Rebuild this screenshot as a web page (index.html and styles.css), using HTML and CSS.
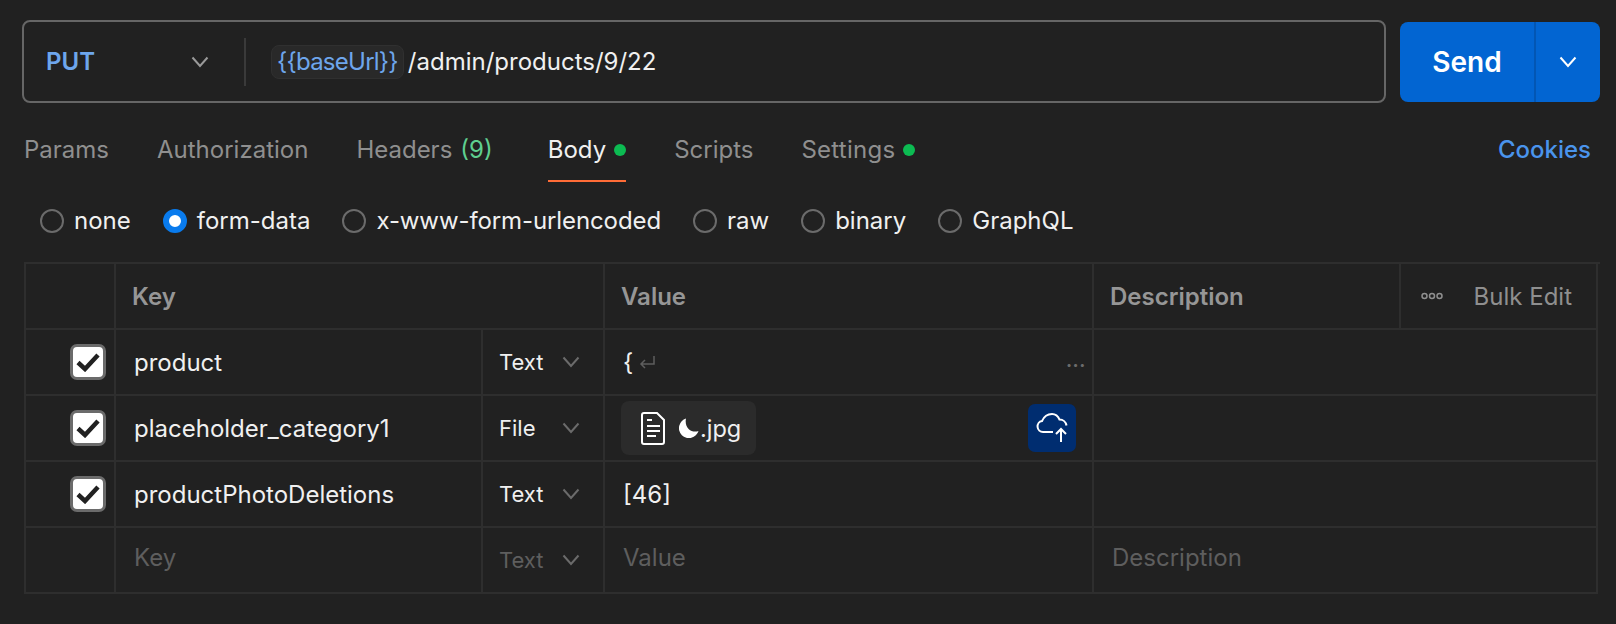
FILE: index.html
```html
<!DOCTYPE html>
<html lang="en">
<head>
    <meta charset="UTF-8">
    <title>PUT /admin/products/9/22</title>
    <link rel="stylesheet" href="styles.css">
</head>
<body>
    <div class="request-bar">
        <div class="url-bar">
            <div class="method">
                <span>PUT</span>
                <svg class="chevron" width="18" height="12" viewBox="0 0 18 12"><path d="M1.5 1.5 9 10l7.5-8.5"/></svg>
            </div>
            <div class="url">
                <span class="variable">{{baseUrl}}</span>
                <span>/admin/products/9/22</span>
            </div>
        </div>
        <div class="send">
            <span class="send-label">Send</span>
            <span class="send-menu">
                <svg class="chevron" width="18" height="12" viewBox="0 0 18 12"><path d="M1.5 1.5 9 10l7.5-8.5"/></svg>
            </span>
        </div>
    </div>

    <div class="tabs">
        <span class="tab">Params</span>
        <span class="tab">Authorization</span>
        <span class="tab headers">Headers <span class="count">(9)</span></span>
        <span class="tab active">Body <i class="dot"></i></span>
        <span class="tab">Scripts</span>
        <span class="tab settings">Settings <i class="dot"></i></span>
        <span class="cookies">Cookies</span>
    </div>

    <div class="body-types">
        <label class="radio"><i></i>none</label>
        <label class="radio checked"><i></i>form-data</label>
        <label class="radio long"><i></i>x-www-form-urlencoded</label>
        <label class="radio"><i></i>raw</label>
        <label class="radio"><i></i>binary</label>
        <label class="radio"><i></i>GraphQL</label>
    </div>

    <div class="params">
        <div class="cell"></div>
        <div class="cell head span-2">Key</div>
        <div class="cell head">Value</div>
        <div class="cell head">Description</div>
        <div class="cell bulk">
            <svg width="22" height="8" viewBox="0 0 22 8"><circle cx="3.5" cy="4" r="2.5"/><circle cx="11" cy="4" r="2.5"/><circle cx="18.5" cy="4" r="2.5"/></svg>
            <span>Bulk Edit</span>
        </div>

        <div class="cell check"><span class="checkbox"><svg width="26" height="20" viewBox="0 0 26 20"><path d="M3 10.500 10 17 23 3"/></svg></span></div>
        <div class="cell key">product</div>
        <div class="cell type">Text <svg class="chevron" width="18" height="12" viewBox="0 0 18 12"><path d="M1.5 1.5 9 10l7.5-8.5"/></svg></div>
        <div class="cell value multiline">
            <span>{</span>
            <svg class="return" width="16" height="14" viewBox="0 0 16 14"><path d="M15 1v8H2M6 5 2 9l4 4"/></svg>
            <span class="more">&bull;&bull;&bull;</span>
        </div>
        <div class="cell span-2"></div>

        <div class="cell check"><span class="checkbox"><svg width="26" height="20" viewBox="0 0 26 20"><path d="M3 10.500 10 17 23 3"/></svg></span></div>
        <div class="cell key">placeholder_category1</div>
        <div class="cell type">File <svg class="chevron" width="18" height="12" viewBox="0 0 18 12"><path d="M1.5 1.5 9 10l7.5-8.5"/></svg></div>
        <div class="cell value file">
            <span class="file-chip">
                <svg width="24" height="33" viewBox="0 0 24 33" class="doc"><path d="M3 1h13l7 7v22a2 2 0 0 1-2 2H3a2 2 0 0 1-2-2V3a2 2 0 0 1 2-2z"/><path d="M6 8h5M6 14h13M6 19h13M6 24h9"/></svg>
                <span class="file-name">
                    <svg width="20" height="20" viewBox="0 0 20 20"><path d="M7 .5A10 10 0 1 0 19.500 13C13 15.500 5 10 7 .5z"/></svg>.jpg
                </span>
            </span>
            <span class="upload">
                <svg width="32" height="30" viewBox="0 0 32 30"><path d="M17 19H7a5.500 5.500 0 0 1-1-10.900C8 3.500 12 1 16 1c3.500 0 6 2 7.500 5.500 3.500 0 6.500 2.500 7 6"/><path d="M25 29V16M20 21l5-5 5 5"/></svg>
            </span>
        </div>
        <div class="cell span-2"></div>

        <div class="cell check"><span class="checkbox"><svg width="26" height="20" viewBox="0 0 26 20"><path d="M3 10.500 10 17 23 3"/></svg></span></div>
        <div class="cell key">productPhotoDeletions</div>
        <div class="cell type">Text <svg class="chevron" width="18" height="12" viewBox="0 0 18 12"><path d="M1.5 1.5 9 10l7.5-8.5"/></svg></div>
        <div class="cell value">[46]</div>
        <div class="cell span-2"></div>

        <div class="cell"></div>
        <div class="cell key placeholder">Key</div>
        <div class="cell type muted">Text <svg class="chevron" width="18" height="12" viewBox="0 0 18 12"><path d="M1.5 1.5 9 10l7.5-8.5"/></svg></div>
        <div class="cell value placeholder">Value</div>
        <div class="cell value placeholder span-2">Description</div>
    </div>
</body>
</html>
```

FILE: styles.css
```css
body {
    font-family: Inter, "Liberation Sans", sans-serif;
    font-size: 24px;
    background-color: #212121;
    color: #f0f0f0;
    margin: 0;
    padding: 20px 16px 0 22px;
}

svg {
    display: block;
    flex: none;
}

.chevron path {
    fill: none;
    stroke: #9a9a9a;
    stroke-width: 2;
}

/* request bar */
.request-bar {
    display: flex;
    align-items: flex-start;
    gap: 14px;
}

.url-bar {
    flex: 1;
    height: 83px;
    box-sizing: border-box;
    display: flex;
    align-items: center;
    border: 2px solid #666;
    border-radius: 8px;
}

.method {
    width: 222px;
    height: 48px;
    box-sizing: border-box;
    display: flex;
    align-items: center;
    justify-content: space-between;
    padding: 0 35px 0 22px;
    border-right: 2px solid #3a3a3a;
    color: #6ea6ec;
    font-weight: 600;
}

.url {
    display: flex;
    align-items: center;
    gap: 4px;
    margin-left: 25px;
}

.variable {
    padding: 0 5px;
    height: 34px;
    line-height: 32px;
    box-sizing: border-box;
    border: 1px solid #303030;
    border-radius: 8px;
    background: #292929;
    color: #6ea6ec;
    letter-spacing: -0.75px;
}

.send {
    width: 200px;
    height: 80px;
    margin-top: 2px;
    display: flex;
    background: #0265d2;
    border-radius: 8px;
    color: #fff;
    font-size: 28px;
    font-weight: 600;
}

.send-label {
    width: 134px;
    display: flex;
    align-items: center;
    justify-content: center;
    border-right: 2px solid #0256b4;
}

.send-menu {
    flex: 1;
    display: flex;
    align-items: center;
    justify-content: center;
}

.send-menu .chevron path {
    stroke: #fff;
}

/* tabs */
.tabs {
    display: flex;
    align-items: flex-start;
    gap: 48px;
    margin-top: 16px;
    padding: 0 9px 0 2px;
}

.tab {
    display: flex;
    align-items: center;
    gap: 8px;
    padding: 16px 0 15px;
    line-height: 30px;
    color: #8f8f8f;
    border-bottom: 2px solid transparent;
}

.tab.headers {
    margin-right: 7px;
}

.tab.settings {
    letter-spacing: 0.25px;
}

.tab.active {
    color: #f0f0f0;
    border-bottom-color: #ff6c37;
}

.count {
    color: #5fcf90;
}

.dot {
    width: 12px;
    height: 12px;
    border-radius: 50%;
    background: #0cbb52;
}

.cookies {
    margin-left: auto;
    padding-top: 16px;
    line-height: 30px;
    color: #4a94ec;
    font-weight: 500;
}

/* body type radios */
.body-types {
    display: flex;
    gap: 32px;
    padding: 24px 0 26px 18px;
    line-height: 30px;
}

.radio {
    display: flex;
    align-items: center;
    gap: 10px;
}

.radio.long {
    letter-spacing: -0.1px;
}

.radio i {
    width: 24px;
    height: 24px;
    box-sizing: border-box;
    border: 2px solid #6b6b6b;
    border-radius: 50%;
}

.radio.checked i {
    border: 6px solid #097bed;
    background: #fff;
}

/* params table */
.params {
    display: grid;
    grid-template-columns: 90px 367px 122px 489px 307px 197px;
    grid-auto-rows: 66px;
    margin-left: 2px;
    border-top: 2px solid #2e2e2e;
    border-left: 2px solid #2e2e2e;
}

.cell {
    box-sizing: border-box;
    display: flex;
    align-items: center;
    border-right: 2px solid #2e2e2e;
    border-bottom: 2px solid #2e2e2e;
}

.span-2 {
    grid-column: span 2;
}

.head {
    padding-left: 16px;
    color: #969696;
    font-weight: 600;
}

.bulk {
    justify-content: space-between;
    padding: 0 24px 0 20px;
    color: #8f8f8f;
}

.bulk svg circle {
    fill: none;
    stroke: #8f8f8f;
    stroke-width: 1.500;
}

.check {
    justify-content: flex-end;
    padding-right: 8px;
}

.checkbox {
    width: 36px;
    height: 36px;
    box-sizing: border-box;
    display: flex;
    align-items: center;
    justify-content: center;
    background: #fff;
    border: 3px solid #6b6b6b;
    border-radius: 7px;
}

.checkbox path {
    fill: none;
    stroke: #212121;
    stroke-width: 4.500;
}

.key {
    padding-left: 18px;
}

.type {
    justify-content: space-between;
    padding: 0 23px 0 16px;
    font-size: 22px;
}

.type .chevron path {
    stroke: #6b6b6b;
}

.type.muted {
    color: #5e5e5e;
}

.value {
    padding-left: 18px;
}

.placeholder {
    color: #5e5e5e;
    padding-bottom: 6px;
}

.multiline {
    position: relative;
}

.return {
    margin-left: 6px;
}

.return path {
    fill: none;
    stroke: #5e5e5e;
    stroke-width: 1.500;
}

.more {
    position: absolute;
    right: 6px;
    top: 28px;
    font-size: 10px;
    letter-spacing: 1px;
    color: #6b6b6b;
}

.file {
    justify-content: space-between;
    padding: 0 16px;
}

.file-chip {
    width: 135px;
    height: 54px;
    box-sizing: border-box;
    display: flex;
    align-items: center;
    gap: 14px;
    padding-left: 20px;
    background: #2b2b2b;
    border-radius: 8px;
}

.doc path {
    fill: none;
    stroke: #fff;
    stroke-width: 2;
}

.file-name {
    display: flex;
    align-items: center;
    gap: 1px;
    font-size: 23.500px;
}

.file-name path {
    fill: #fff;
}

.upload {
    width: 48px;
    height: 48px;
    display: flex;
    align-items: center;
    justify-content: center;
    background: #002d70;
    border-radius: 7px;
}

.upload path {
    fill: none;
    stroke: #fff;
    stroke-width: 2;
}
```
